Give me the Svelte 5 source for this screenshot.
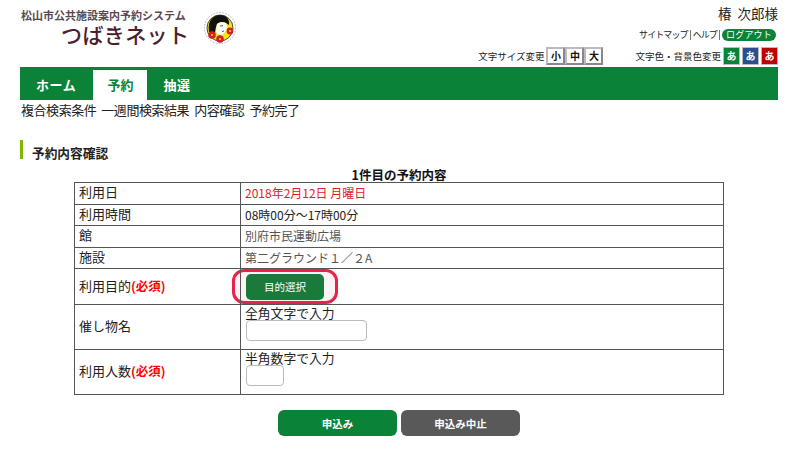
<script>
	const tabs = [
		{ label: 'ホーム', active: false },
		{ label: '予約', active: true },
		{ label: '抽選', active: false }
	];
	const sizes = ['小', '中', '大'];
	const themes = ['green', 'blue', 'red'];
</script>

<div class="page">
	<header class="header">
		<div class="brand">
			<div class="brand-text">
				<div class="system">松山市公共施設案内予約システム</div>
				<div class="title">つばきネット</div>
			</div>
			<svg class="logo" width="34" height="36" viewBox="0 0 34 36" aria-hidden="true">
				<circle cx="17" cy="17" r="15.5" fill="#fff" stroke="#aaa" stroke-width="1" stroke-dasharray="1.5 1.5" />
				<circle cx="17" cy="17" r="13" fill="#f5e61a" stroke="#222" stroke-width="0.8" />
				<path d="M6 21C4 9 11 4 17 4c6 0 10 4 9 10l-3-2c-3-2-7-1-9 1-1 3-2 6-2 10z" fill="#111" />
				<path d="M14 13c3-2 6-2 9-1 2 4 0 10-4 12-3 0-5-1-6-3z" fill="#fff" />
				<path d="M17 15l3-.5M21 20l-2 .5" stroke="#333" stroke-width="0.8" />
				<circle cx="9" cy="24" r="3.8" fill="#d0202a" />
				<circle cx="17" cy="28" r="3.8" fill="#d0202a" />
				<circle cx="27" cy="20" r="3.4" fill="#d0202a" />
				<circle cx="9" cy="24" r="1" fill="#f5e61a" />
				<circle cx="17" cy="28" r="1" fill="#f5e61a" />
				<circle cx="27" cy="20" r="1" fill="#f5e61a" />
			</svg>
		</div>
		<div class="account">
			<div class="user">椿  次郎様</div>
			<div class="links">
				<span>サイトマップ</span><i></i><span>ヘルプ</span><i></i><span class="logout">ログアウト</span>
			</div>
			<div class="settings">
				<div class="setting sizes">
					<span>文字サイズ変更</span>
					<div class="keys">
						{#each sizes as s}
							<span class="size-key">{s}</span>
						{/each}
					</div>
				</div>
				<div class="setting">
					<span>文字色・背景色変更</span>
					<div class="keys themes">
						{#each themes as t}
							<span class="theme-key {t}">あ</span>
						{/each}
					</div>
				</div>
			</div>
		</div>
	</header>

	<nav class="nav">
		{#each tabs as tab}
			<span class="tab" class:active={tab.active}>{tab.label}</span>
		{/each}
	</nav>

	<div class="steps">
		<span>複合検索条件</span><span>一週間検索結果</span><span>内容確認</span><span>予約完了</span>
	</div>

	<h2 class="heading">予約内容確認</h2>

	<div class="content">
		<div class="caption">1件目の予約内容</div>
		<table>
			<tbody>
				<tr class="r1">
					<th>利用日</th>
					<td class="date">2018年2月12日 月曜日</td>
				</tr>
				<tr class="r1">
					<th>利用時間</th>
					<td>08時00分～17時00分</td>
				</tr>
				<tr class="r1">
					<th>館</th>
					<td class="muted">別府市民運動広場</td>
				</tr>
				<tr class="r1">
					<th>施設</th>
					<td class="muted">第二グラウンド１／２A</td>
				</tr>
				<tr class="r2">
					<th>利用目的<b>(必須)</b></th>
					<td class="pick-cell">
						<span class="pick-ring">
							<button class="pick">目的選択</button>
						</span>
					</td>
				</tr>
				<tr class="r3">
					<th>催し物名</th>
					<td class="field">
						<div>全角文字で入力</div>
						<input class="wide" type="text" />
					</td>
				</tr>
				<tr class="r3">
					<th>利用人数<b>(必須)</b></th>
					<td class="field">
						<div>半角数字で入力</div>
						<input class="short" type="text" />
					</td>
				</tr>
			</tbody>
		</table>

		<div class="actions">
			<button class="action apply">申込み</button>
			<button class="action cancel">申込み中止</button>
		</div>
	</div>
</div>

<style>
	:global(body) {
		background: #fff;
	}

	.page {
		width: 800px;
		height: 452px;
		overflow: hidden;
		box-sizing: border-box;
		padding-left: 20px;
		font-family: "Noto Sans CJK JP", "Noto Sans", sans-serif;
		color: #222;
	}

	.header {
		width: 758px;
		height: 67px;
		display: flex;
		justify-content: space-between;
	}

	.brand {
		display: flex;
		align-items: flex-start;
		padding-top: 9px;
	}

	.brand-text {
		width: 183px;
	}

	.system {
		font-size: 11px;
		line-height: 12px;
		font-weight: 700;
		color: #5a4a50;
		margin-left: 1px;
		white-space: nowrap;
	}

	.title {
		font-size: 21px;
		font-weight: 500;
		line-height: 26px;
		letter-spacing: 0.4px;
		margin-left: 41px;
		color: #4a1f30;
		white-space: nowrap;
	}

	.logo {
		margin: 2px 0 0 0;
	}

	.account {
		display: flex;
		flex-direction: column;
		align-items: flex-end;
	}

	.user {
		font-size: 13.5px;
		line-height: 18px;
		margin-top: 4px;
		white-space: pre;
	}

	.links {
		display: flex;
		align-items: center;
		gap: 2px;
		font-size: 9px;
		line-height: 12px;
		margin-top: 7px;
		margin-right: 2px;
	}

	.links span:not(.logout) {
		letter-spacing: -0.9px;
	}

	.links i {
		width: 1px;
		height: 10px;
		background: #777;
	}

	.logout {
		background: #0a8237;
		color: #fff;
		border-radius: 6px;
		padding: 0 4px;
		letter-spacing: 0.2px;
	}

	.settings {
		display: flex;
		gap: 32px;
		margin-top: 5px;
	}

	.setting {
		display: flex;
		align-items: center;
		gap: 2px;
		height: 19px;
		font-size: 9.5px;
		white-space: nowrap;
	}

	.keys {
		display: flex;
	}

	.size-key {
		width: 19px;
		height: 18px;
		box-sizing: border-box;
		border: 2px solid #bbb;
		border-right-color: #888;
		border-bottom-color: #888;
		background: #fff;
		color: #111;
		font-size: 10px;
		font-weight: 700;
		line-height: 14px;
		text-align: center;
	}

	.themes {
		gap: 2px;
	}

	.theme-key {
		width: 17px;
		height: 18px;
		box-sizing: border-box;
		border: 1px solid #bbb;
		color: #fff;
		font-size: 10px;
		font-weight: 700;
		line-height: 16px;
		text-align: center;
	}

	.theme-key.green {
		background: #0a8237;
	}

	.theme-key.blue {
		background: #27508f;
	}

	.theme-key.red {
		background: #c00000;
	}

	.nav {
		width: 758px;
		height: 33px;
		box-sizing: border-box;
		padding-top: 3px;
		display: flex;
		background: #0a8237;
	}

	.tab {
		height: 30px;
		padding: 0 17px 0 16px;
		font-size: 13px;
		font-weight: 700;
		line-height: 30px;
		color: #fff;
		letter-spacing: 0.6px;
	}

	.tab.active {
		padding: 0 14px;
		background: #fff;
		color: #0a8237;
		letter-spacing: 0;
	}

	.steps {
		display: flex;
		gap: 5px;
		height: 20px;
		font-size: 13px;
		line-height: 20px;
		letter-spacing: -0.45px;
		margin-left: 1px;
	}

	.heading {
		height: 19px;
		margin: 20px 0 0 0;
		padding-left: 9px;
		border-left: 3px solid #7fb800;
		font-size: 12.7px;
		font-weight: 700;
		line-height: 25px;
	}

	.content {
		width: 650px;
		margin: 8px 0 0 54px;
	}

	.caption {
		font-size: 12.5px;
		font-weight: 700;
		line-height: 15px;
		text-align: center;
		color: #111;
	}

	table {
		width: 650px;
		table-layout: fixed;
		border-collapse: collapse;
		border: 1px solid #555;
		font-size: 13px;
	}

	th,
	td {
		border: 1px solid #555;
		padding: 0 4px;
		text-align: left;
		font-weight: 400;
		line-height: 15px;
	}

	th {
		width: 157px;
		padding-bottom: 3px;
	}

	.r1 {
		height: 21.5px;
	}

	.r2 {
		height: 35px;
	}

	.r3 {
		height: 45px;
	}

	th b {
		color: #f00;
		font-weight: 700;
		font-size: 12.5px;
	}

	td {
		font-size: 12px;
		padding-bottom: 1px;
	}

	.date {
		color: #e0202a;
	}

	.muted {
		color: #555;
	}

	.pick-cell {
		padding: 0;
	}

	.pick-ring {
		display: flex;
		align-items: center;
		justify-content: center;
		width: 106px;
		height: 35px;
		margin-left: -9px;
		box-sizing: border-box;
		border: 3px solid #e8234a;
		border-radius: 12px;
		background: #fdf3f4;
	}

	.pick {
		width: 78px;
		height: 26px;
		padding: 0;
		border: none;
		border-radius: 5px;
		background: #1a7a3c;
		color: #fff;
		font: inherit;
		font-size: 10.5px;
	}

	.field {
		font-size: 12.8px;
		vertical-align: top;
	}

	.field div {
		line-height: 15px;
		height: 15px;
	}

	input {
		display: block;
		box-sizing: border-box;
		height: 21px;
		margin-left: 1px;
		padding: 0;
		border: 1px solid #bbb;
		border-radius: 4px;
		background: #fff;
	}

	.wide {
		width: 121px;
	}

	.short {
		width: 38px;
	}

	.actions {
		display: flex;
		justify-content: center;
		gap: 4px;
		margin-top: 15px;
	}

	.action {
		width: 119px;
		height: 26px;
		padding: 0;
		border: none;
		border-radius: 6px;
		color: #fff;
		font: inherit;
		font-size: 10.5px;
		font-weight: 700;
	}

	.apply {
		background: #0a8237;
	}

	.cancel {
		background: #595959;
	}
</style>
